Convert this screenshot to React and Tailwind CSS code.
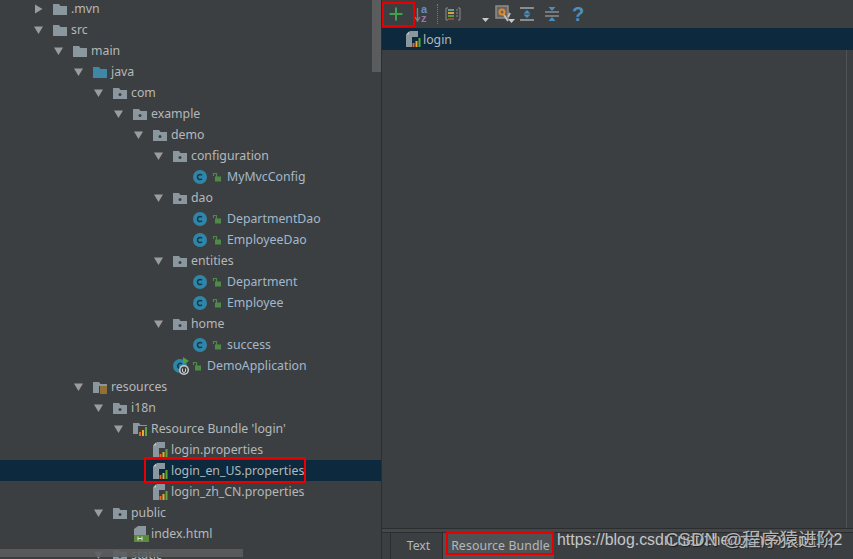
import React from 'react';

const tree = [
  { d: 0, arrow: 'right', icon: 'folder', label: '.mvn' },
  { d: 0, arrow: 'down', icon: 'folder', label: 'src' },
  { d: 1, arrow: 'down', icon: 'folder', label: 'main' },
  { d: 2, arrow: 'down', icon: 'source', label: 'java' },
  { d: 3, arrow: 'down', icon: 'pkg', label: 'com' },
  { d: 4, arrow: 'down', icon: 'pkg', label: 'example' },
  { d: 5, arrow: 'down', icon: 'pkg', label: 'demo' },
  { d: 6, arrow: 'down', icon: 'pkg', label: 'configuration' },
  { d: 7, icon: 'class', label: 'MyMvcConfig', blue: true },
  { d: 6, arrow: 'down', icon: 'pkg', label: 'dao' },
  { d: 7, icon: 'class', label: 'DepartmentDao', blue: true },
  { d: 7, icon: 'class', label: 'EmployeeDao', blue: true },
  { d: 6, arrow: 'down', icon: 'pkg', label: 'entities' },
  { d: 7, icon: 'class', label: 'Department', blue: true },
  { d: 7, icon: 'class', label: 'Employee', blue: true },
  { d: 6, arrow: 'down', icon: 'pkg', label: 'home' },
  { d: 7, icon: 'class', label: 'success', blue: true },
  { d: 6, icon: 'boot', label: 'DemoApplication', blue: true },
  { d: 2, arrow: 'down', icon: 'res', label: 'resources' },
  { d: 3, arrow: 'down', icon: 'pkg', label: 'i18n' },
  { d: 4, arrow: 'down', icon: 'bundle', label: "Resource Bundle 'login'" },
  { d: 5, icon: 'props', label: 'login.properties', tight: true },
  { d: 5, icon: 'props', label: 'login_en_US.properties', selected: true, tight: true },
  { d: 5, icon: 'props', label: 'login_zh_CN.properties', tight: true },
  { d: 3, arrow: 'down', icon: 'pkg', label: 'public' },
  { d: 4, icon: 'html', label: 'index.html', tight: true },
  { d: 3, arrow: 'down', icon: 'pkg', label: 'static' },
];

function Arrow({ dir }) {
  return (
    <svg width="10" height="10" viewBox="0 0 10 10" className="block">
      {dir === 'down' ? <path d="M0 1.500h9L4.500 9z" fill="#9a9c9e" /> : <path d="M1 0.500v9l7.500-4.500z" fill="#9a9c9e" />}
    </svg>
  );
}

function Bars({ x = 0, y = 0 }) {
  return (
    <g transform={`translate(${x} ${y})`}>
      <rect x="0" y="5" width="2" height="4" fill="#e8662a" />
      <rect x="3" y="3" width="2" height="6" fill="#eeaa2c" />
      <rect x="6" y="0" width="2" height="9" fill="#5aa83a" />
    </g>
  );
}

function FolderShape({ color }) {
  return <path d="M0 2h6l1.500 2H14v9H0z" fill={color} />;
}

function NodeIcon({ type }) {
  if (type === 'folder' || type === 'source') {
    return (
      <svg width="14" height="14" viewBox="0 0 14 14" className="block">
        <FolderShape color={type === 'source' ? '#3f87a6' : '#8b979f'} />
      </svg>
    );
  }
  if (type === 'pkg') {
    return (
      <svg width="14" height="14" viewBox="0 0 14 14" className="block">
        <FolderShape color="#8b979f" />
        <circle cx="7" cy="8.500" r="1.500" fill="#3c3f41" />
      </svg>
    );
  }
  if (type === 'res') {
    return (
      <svg width="15" height="14" viewBox="0 0 15 14" className="block">
        <FolderShape color="#8b979f" />
        <rect x="6" y="6" width="9" height="8" fill="#3c3f41" />
        <path d="M7 7h7M7 9h7M7 11h7M7 13h7" stroke="#e3a32d" strokeWidth="1" />
      </svg>
    );
  }
  if (type === 'bundle') {
    return (
      <svg width="15" height="15" viewBox="0 0 15 15" className="block">
        <FolderShape color="#8b979f" />
        <rect x="5" y="5" width="10" height="10" fill="#3c3f41" />
        <Bars x="6" y="6" />
      </svg>
    );
  }
  if (type === 'props') {
    return (
      <svg width="15" height="16" viewBox="0 0 15 16" className="block">
        <path d="M4 0h8v6H6v10H0V4z" fill="#8b979f" />
        <path d="M3 0.500v3H0z" fill="#c0c4c6" />
        <Bars x="6.500" y="7" />
      </svg>
    );
  }
  if (type === 'html') {
    return (
      <svg width="16" height="16" viewBox="0 0 16 16" className="block">
        <path d="M5 0h8v9H1V3z" fill="#8b979f" />
        <rect x="1" y="9" width="15" height="7" fill="#5b8a3c" />
        <path d="M5 10.500v4M9 10.500v4M5 12.500h4" stroke="#d8e6c8" strokeWidth="1" />
      </svg>
    );
  }
  if (type === 'class') {
    return (
      <svg width="14" height="14" viewBox="0 0 14 14" className="block">
        <circle cx="7" cy="7" r="7" fill="#2f86a8" />
        <path d="M9 5.200A2.600 2.600 0 1 0 9 8.800" fill="none" stroke="#143a4a" strokeWidth="1.500" />
      </svg>
    );
  }
  // spring boot main class
  return (
    <svg width="18" height="18" viewBox="0 0 18 18" className="block">
      <circle cx="7" cy="9" r="7" fill="#2f86a8" />
      <path d="M9 7A2.600 2.600 0 1 0 9 11" fill="none" stroke="#143a4a" strokeWidth="1.500" />
      <path d="M10 0l6 4-6 4z" fill="#4f9e3f" />
      <circle cx="11" cy="13" r="5" fill="#c9cbcd" />
      <circle cx="11" cy="13" r="3.500" fill="#3c3f41" />
      <path d="M9.500 11.500v2.500a1.500 1.500 0 0 0 3 0v-2.500" fill="none" stroke="#d0d2d4" strokeWidth="1" />
    </svg>
  );
}

function Lock() {
  return (
    <svg width="9" height="10" viewBox="0 0 9 10" className="block shrink-0">
      <path d="M1.500 4V1.500h3V5" fill="none" stroke="#4e8a45" strokeWidth="1.200" />
      <rect x="3" y="4.500" width="6" height="5" fill="#4e8a45" />
    </svg>
  );
}

function TreeRow({ node }) {
  const left = 34 + node.d * 20;
  return (
    <div className={`relative flex h-[21px] shrink-0 items-center whitespace-nowrap ${node.selected ? 'bg-[#0d293e]' : ''}`}>
      <div style={{ width: left }} className="shrink-0" />
      <div className="flex w-[19px] shrink-0 items-center">{node.arrow && <Arrow dir={node.arrow} />}</div>
      <div className={`flex shrink-0 items-center ${node.tight ? 'w-[18px]' : node.blue ? 'w-[19px]' : 'w-[18px]'}`}>
        <NodeIcon type={node.icon} />
      </div>
      {node.blue && <div className="mr-[6px]"><Lock /></div>}
      <span className={`pt-[2px] ${node.blue ? 'text-[#a3b8cc]' : 'text-[#b4b8ba]'}`}>{node.label}</span>
    </div>
  );
}

function Toolbar() {
  return (
    <div className="relative flex h-[28px] shrink-0 items-center pl-[7px]">
      {/* plus */}
      <svg width="14" height="14" viewBox="0 0 14 14" className="block"><path d="M7 0.500v13M0.500 7h13" stroke="#3fa34d" strokeWidth="2" /></svg>
      {/* sort a-z */}
      <svg width="15" height="24" viewBox="0 0 15 24" className="ml-[11px] block">
        <path d="M3.500 6v12M1 15l2.500 4 2.500-4" fill="none" stroke="#7d8082" strokeWidth="1.300" />
        <text x="7" y="11" fontSize="11" fontWeight="bold" fill="#5f93c4" fontFamily="Liberation Sans">a</text>
        <text x="7" y="20" fontSize="11" fontWeight="bold" fill="#9876aa" fontFamily="Liberation Sans">z</text>
      </svg>
      <div className="ml-[8px] h-[20px] border-l border-dotted border-[#77797b]" />
      {/* group */}
      <svg width="16" height="14" viewBox="0 0 16 14" className="ml-[7px] block">
        <path d="M3 1H1v12h2M13 1h2v12h-2" fill="none" stroke="#8a8c8e" strokeWidth="1" />
        <path d="M3 3h6" stroke="#5f9ea0" strokeWidth="2" />
        <path d="M3 6h6" stroke="#e3a32d" strokeWidth="2" />
        <path d="M3 9h6" stroke="#5a9e3a" strokeWidth="2" />
        <path d="M3 12h6" stroke="#d0644a" strokeWidth="1" />
        <path d="M11 3h2M11 6h2M11 9h2" stroke="#8a8c8e" strokeWidth="1" />
      </svg>
      <svg width="7" height="4" viewBox="0 0 7 4" className="ml-[21px] mt-[11px] block"><path d="M0 0h7L3.500 4z" fill="#c8cacc" /></svg>
      {/* settings */}
      <svg width="20" height="18" viewBox="0 0 20 18" className="ml-[6px] block">
        <rect x="1" y="1" width="12" height="12" fill="#6b6458" stroke="#8a8c8e" strokeWidth="1.500" />
        <circle cx="7" cy="7" r="2.500" fill="none" stroke="#d98b32" strokeWidth="2" />
        <path d="M9 10l4 6M15 8l-2 4" stroke="#b8babc" strokeWidth="2" />
        <path d="M13 14h7l-3.500 4z" fill="#c8cacc" />
      </svg>
      {/* expand */}
      <svg width="14" height="14" viewBox="0 0 14 14" className="ml-[5px] block">
        <path d="M0 1h14M0 13h14" stroke="#8a8c8e" strokeWidth="2" />
        <path d="M7 3l3.500 3.500h-7zM7 11l3.500-3.500h-7z" fill="#4a8fc0" />
      </svg>
      {/* collapse */}
      <svg width="14" height="14" viewBox="0 0 14 14" className="ml-[11px] block">
        <path d="M0 5h14M0 9h14" stroke="#8a8c8e" strokeWidth="1.500" />
        <path d="M7 4L3.500 0h7zM7 10l3.500 4h-7z" fill="#4a8fc0" />
      </svg>
      <span className="ml-[13px] text-[20px] leading-none font-bold text-[#4a8fc0] [font-family:'Liberation_Sans',sans-serif]">?</span>
    </div>
  );
}

export default function App() {
  return (
    <div className="relative flex h-[559px] w-[853px] overflow-hidden bg-[#3c3f41] text-[12.3px] [font-family:'Noto_Sans',sans-serif]">
      <div className="relative w-[381px] shrink-0 overflow-hidden">
        <div className="-mt-[2px] flex flex-col">
          {tree.map((node) => <TreeRow key={node.label} node={node} />)}
        </div>
        {/* scrollbars */}
        <div className="absolute top-0 right-0 h-[72px] w-[9px] bg-[#5a5c5e]" />
        <div className="absolute bottom-[2px] left-0 h-[8px] w-[243px] bg-[#5a5c5e]/90" />
      </div>
      <div className="flex flex-1 flex-col border-l border-[#2b2d2e]">
        <Toolbar />
        <div className="flex h-[22px] shrink-0 items-center bg-[#0d293e] pl-[24px] text-[#b4b8ba]">
          <div className="mr-[2px]"><NodeIcon type="props" /></div>
          <span className="pt-[2px]">login</span>
        </div>
        <div className="flex flex-1 justify-end">
          <div className="w-[7px] border-l border-[#505254]" />
        </div>
        <div className="h-[5px] shrink-0 border-y border-[#2b2d2e] bg-[#45484a]" />
        <div className="flex h-[26px] shrink-0">
          <div className="w-[9px] border-r border-[#2b2d2e]" />
          <div className="flex w-[52px] items-center justify-center border-r border-[#2b2d2e] pl-[4px] text-[#b4b8ba]">Text</div>
          <div className="flex w-[111px] items-center justify-center bg-[#4e5254] pl-[4px] tracking-[0.1px] text-[#b4b8ba]">Resource Bundle</div>
        </div>
      </div>

      {/* red annotation boxes */}
      <div className="absolute top-[2px] left-[382px] h-[25px] w-[33px] border-2 border-[#e80000]" />
      <div className="absolute top-[457px] left-[144px] h-[26px] w-[162px] border-2 border-[#e80000]" />
      <div className="absolute top-[532px] left-[446px] h-[23px] w-[108px] border-2 border-[#e80000]" />

      {/* watermarks */}
      <div className="absolute top-[530px] left-[557px] text-[15.9px] leading-[20px] whitespace-nowrap text-[#c4c6c8] [font-family:'Liberation_Sans',sans-serif]">https://blog.csdn.net/zhengzhaoyang122</div>
      <div className="absolute top-[529px] left-[665px] text-[18.7px] leading-[22px] whitespace-nowrap text-[#b4b6b8] [font-family:'Liberation_Sans','Noto_Sans_CJK_SC',sans-serif] [text-shadow:1px_1px_1px_#1c1c1c]">CSDN @程序猿进阶</div>
    </div>
  );
}
